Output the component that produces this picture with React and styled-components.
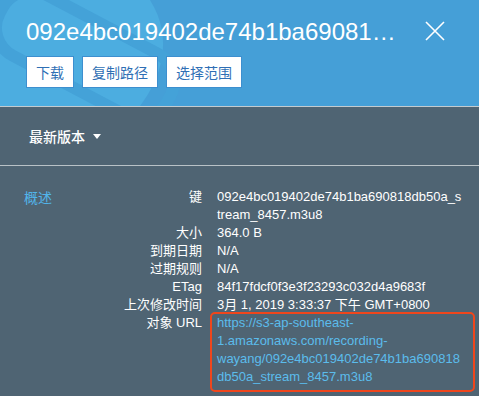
import React from 'react'
import styled, { createGlobalStyle } from 'styled-components'

const GlobalStyle = createGlobalStyle`
  html, body {
    margin: 0;
    padding: 0;
    background: #4f6473;
  }
  body {
    font-family: "Liberation Sans", "Noto Sans CJK SC", Arial, sans-serif;
  }
`

const details = [
  { label: '键', value: '092e4bc019402de74b1ba690818db50a_stream_8457.m3u8' },
  { label: '大小', value: '364.0 B' },
  { label: '到期日期', value: 'N/A' },
  { label: '过期规则', value: 'N/A' },
  { label: 'ETag', value: '84f17fdcf0f3e3f23293c032d4a9683f' },
  { label: '上次修改时间', value: '3月 1, 2019 3:33:37 下午 GMT+0800' },
]

const objectUrl =
  'https://s3-ap-southeast-1.amazonaws.com/recording-wayang/092e4bc019402de74b1ba690818db50a_stream_8457.m3u8'

const Modal = () => {
  return (
    <Wrapper>
      <GlobalStyle />
      <Header>
        <Backdrop viewBox="0 0 479 107" preserveAspectRatio="none" aria-hidden="true">
          <path d="M0 0 H150 C175 40 160 80 140 107 H0 Z" fill="#4cade0" />
          <rect
            x="-10"
            y="20"
            width="190"
            height="70"
            rx="32"
            fill="none"
            stroke="#44a2d8"
            strokeWidth="12"
            transform="rotate(28 85 55)"
          />
        </Backdrop>
        <TitleRow>
          <Title title="092e4bc019402de74b1ba690818db50a_stream_8457.m3u8">
            092e4bc019402de74b1ba69081…
          </Title>
          <CloseButton aria-label="close">
            <svg width="20" height="20" viewBox="0 0 20 20">
              <path d="M1 1 L19 19 M19 1 L1 19" stroke="#fff" strokeWidth="1.6" />
            </svg>
          </CloseButton>
        </TitleRow>
        <Actions>
          <ActionButton>下载</ActionButton>
          <ActionButton>复制路径</ActionButton>
          <ActionButton>选择范围</ActionButton>
        </Actions>
      </Header>
      <VersionBar>
        <VersionToggle>
          最新版本
          <Caret />
        </VersionToggle>
      </VersionBar>
      <Body>
        <SectionTitle>概述</SectionTitle>
        <Table>
          {details.map((item) => (
            <React.Fragment key={item.label}>
              <Label>{item.label}</Label>
              <Value>{item.value}</Value>
            </React.Fragment>
          ))}
          <Label>对象 URL</Label>
          <Value>
            <Highlight>
              <Link href="#">{objectUrl}</Link>
            </Highlight>
          </Value>
        </Table>
      </Body>
    </Wrapper>
  )
}

const Wrapper = styled.div`
  width: 479px;
  height: 396px;
  overflow: hidden;
  background: #4f6473;
`

const Header = styled.header`
  position: relative;
  height: 107px;
  box-sizing: border-box;
  padding: 16px 34px 0 26px;
  background: #459fd7;
  border-bottom: 1px solid #c3cbd0;
  overflow: hidden;
`

const Backdrop = styled.svg`
  position: absolute;
  inset: 0;
  width: 100%;
  height: 100%;
`

const TitleRow = styled.div`
  position: relative;
  display: flex;
  align-items: center;
  justify-content: space-between;
`

const Title = styled.h1`
  margin: 0;
  font-size: 24px;
  line-height: 32px;
  font-weight: 400;
  color: #fff;
  white-space: nowrap;
`

const CloseButton = styled.button`
  display: flex;
  padding: 0;
  margin-top: -2px;
  border: none;
  background: none;
  cursor: pointer;
`

const Actions = styled.div`
  position: relative;
  display: flex;
  gap: 8px;
  margin-top: 8px;
`

const ActionButton = styled.button`
  height: 32px;
  padding: 0 9px;
  background: #fff;
  border: 1px solid #3d8fcf;
  border-radius: 0;
  color: #2f6fb5;
  font-family: "Noto Sans CJK SC", sans-serif;
  font-size: 14px;
  cursor: pointer;
`

const VersionBar = styled.div`
  height: 58px;
  display: flex;
  align-items: center;
  padding-left: 29px;
  border-bottom: 1px solid #b9c2c7;
`

const VersionToggle = styled.div`
  display: flex;
  align-items: center;
  gap: 8px;
  color: #fff;
  font-family: "Noto Sans CJK SC", sans-serif;
  font-size: 14px;
  font-weight: 500;
`

const Caret = styled.span`
  width: 0;
  height: 0;
  border-left: 4.5px solid transparent;
  border-right: 4.5px solid transparent;
  border-top: 5px solid #fff;
`

const Body = styled.div`
  display: flex;
  padding: 22px 15px 0 24px;
`

const SectionTitle = styled.div`
  color: #52b5ea;
  font-family: "Noto Sans CJK SC", sans-serif;
  font-size: 14px;
  line-height: 18px;
`

const Table = styled.div`
  flex: 1;
  display: grid;
  grid-template-columns: 1fr 247px;
  column-gap: 15px;
  font-size: 13px;
  line-height: 18px;
  color: #fff;
`

const Label = styled.div`
  text-align: right;
  white-space: nowrap;
`

const Value = styled.div`
  word-break: break-all;
`

const Highlight = styled.div`
  position: relative;
  &::after {
    content: '';
    position: absolute;
    top: -2px;
    bottom: -6px;
    left: -7px;
    right: -11px;
    border: 2px solid #f0461c;
    border-radius: 5px;
    pointer-events: none;
  }
`

const Link = styled.a`
  color: #5bbcec;
  text-decoration: none;
  word-break: normal;
  overflow-wrap: anywhere;
`

export default Modal
